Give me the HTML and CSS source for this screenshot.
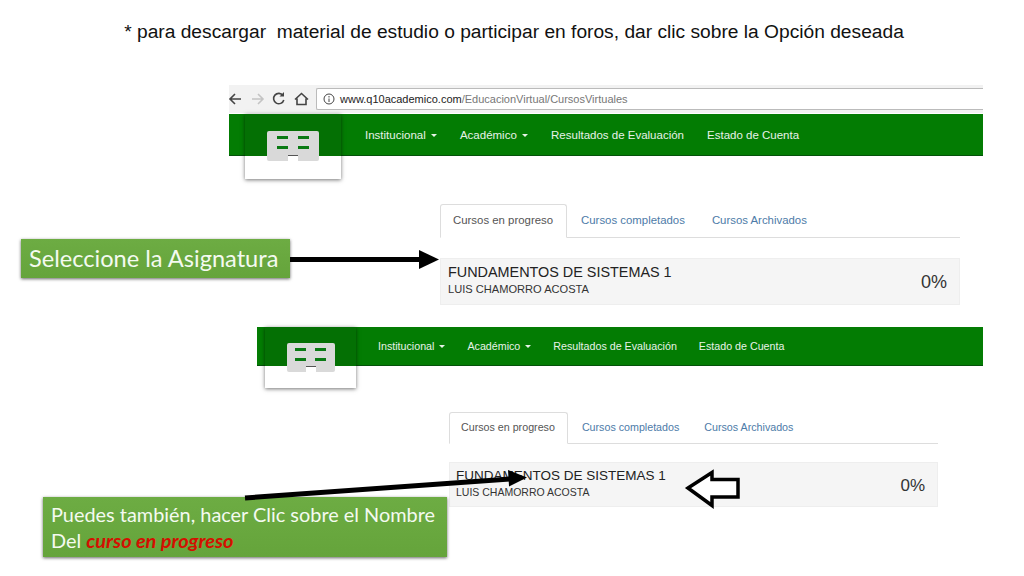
FILE: index.html
```html
<!DOCTYPE html>
<html lang="es">
<head>
  <meta charset="UTF-8"/>
  <meta name="viewport" content="width=device-width, initial-scale=1.0"/>
  <title>Seleccione la Asignatura</title>
  <link rel="stylesheet" href="styles.css">
</head>
<body>
  <div class="slide">
    <p class="slide-title">* para descargar&nbsp; material de estudio o participar en foros, dar clic sobre la Opción deseada</p>

    <!-- first capture -->
    <div class="shot shot-top">
      <div class="browser-bar">
        <svg class="browser-icons" width="84" height="22" viewBox="0 0 84 22" fill="none" stroke="#444" stroke-width="1.6">
          <path d="M13 11H2M7 6l-5 5 5 5"/>
          <path d="M24 11h11M30 6l5 5-5 5" stroke="#c4c4c4"/>
          <path d="M55 7.500a5.200 5.200 0 1 0 .8 4.500"/>
          <path d="M56 4v4.500h-4.500" fill="#444" stroke="none"/>
          <path d="M67 11.500l6.500-6 6.500 6M69 10.500v6h9v-6"/>
        </svg>
        <div class="url-box">
          <svg width="12" height="12" viewBox="0 0 12 12" fill="none" stroke="#444">
            <circle cx="6" cy="6" r="5"/>
            <path d="M6 5.500v3.500M6 3v1.500"/>
          </svg>
          <span class="url-host">www.q10academico.com</span><span class="url-path">/EducacionVirtual/CursosVirtuales</span>
        </div>
      </div>
      <nav class="navbar">
        <div class="nav-logo">
          <div class="logo-mark">
            <span class="logo-row"><i></i><i></i></span>
            <span class="logo-row"><i></i><i></i></span>
            <span class="logo-notch"></span>
          </div>
        </div>
        <ul class="nav-menu">
          <li>Institucional <b class="caret"></b></li>
          <li>Académico <b class="caret"></b></li>
          <li>Resultados de Evaluación</li>
          <li>Estado de Cuenta</li>
        </ul>
      </nav>
    </div>

    <div class="courses courses-top">
      <ul class="tabs">
        <li class="tab active">Cursos en progreso</li>
        <li class="tab">Cursos completados</li>
        <li class="tab">Cursos Archivados</li>
      </ul>
      <div class="course-row">
        <div>
          <div class="course-name">FUNDAMENTOS DE SISTEMAS 1</div>
          <div class="course-teacher">LUIS CHAMORRO ACOSTA</div>
        </div>
        <div class="course-pct">0%</div>
      </div>
    </div>

    <!-- second capture -->
    <div class="shot shot-bottom">
      <nav class="navbar">
        <div class="nav-logo">
          <div class="logo-mark">
            <span class="logo-row"><i></i><i></i></span>
            <span class="logo-row"><i></i><i></i></span>
            <span class="logo-notch"></span>
          </div>
        </div>
        <ul class="nav-menu">
          <li>Institucional <b class="caret"></b></li>
          <li>Académico <b class="caret"></b></li>
          <li>Resultados de Evaluación</li>
          <li>Estado de Cuenta</li>
        </ul>
      </nav>
    </div>

    <div class="courses courses-bottom">
      <ul class="tabs">
        <li class="tab active">Cursos en progreso</li>
        <li class="tab">Cursos completados</li>
        <li class="tab">Cursos Archivados</li>
      </ul>
      <div class="course-row">
        <div>
          <div class="course-name">FUNDAMENTOS DE SISTEMAS 1</div>
          <div class="course-teacher">LUIS CHAMORRO ACOSTA</div>
        </div>
        <div class="course-pct">0%</div>
      </div>
    </div>

    <div class="callout callout-select">Seleccione la Asignatura</div>
    <div class="callout callout-click">Puedes también, hacer Clic sobre el Nombre<br>Del <em>curso en progreso</em></div>

    <svg class="arrows" width="1024" height="576" viewBox="0 0 1024 576">
      <path d="M290 259.500H420" stroke="#000" stroke-width="5"/>
      <path d="M419 250l20 9.500-20 9.500z" fill="#000"/>
      <path d="M245 498L510 479" stroke="#000" stroke-width="5"/>
      <path d="M508 470l19 7.500-18 9z" fill="#000"/>
      <path d="M688 488L712 472.500V479.500H738V497H712V505.500z" fill="#fff" stroke="#000" stroke-width="3.500"/>
    </svg>
  </div>
</body>
</html>
```

FILE: styles.css
```css
:root {
  --green: #037c03;
  --link: #4d7ba8;
  --line: #ddd;
}
* { box-sizing: border-box; margin: 0; padding: 0; }
body {
  background: #fff;
  font-family: "Liberation Sans", Arial, sans-serif;
  color: #222;
}
ul { list-style: none; }
.slide {
  position: relative;
  width: 1024px;
  height: 576px;
  overflow: hidden;
}
.slide-title {
  padding: 21px 0 0 4px;
  text-align: center;
  font-size: 19.200px;
  line-height: 22px;
  color: #111;
}

/* pictures pasted on the slide */
.shot, .courses, .callout, .arrows { position: absolute; }
.shot-top { left: 229px; top: 85px; width: 754px; }
.shot-bottom { left: 257px; top: 327px; width: 726px; }
.courses-top { left: 440px; top: 204px; width: 520px; }
.courses-bottom { left: 449px; top: 412px; width: 489px; }
.arrows { left: 0; top: 0; }

.browser-bar {
  display: flex;
  align-items: center;
  height: 28px;
  background: #f2f2f2;
}
.browser-icons { flex: none; margin-left: -1px; margin-right: 4px; }
.url-box {
  flex: 1;
  display: flex;
  align-items: center;
  height: 22px;
  padding-left: 6px;
  background: #fff;
  border: 1px solid #bbb;
  border-right: none;
  border-radius: 2px 0 0 2px;
  font-size: 11px;
}
.url-box svg { margin-right: 5px; }
.url-host { color: #222; }
.url-path { color: #777; }

.navbar {
  display: flex;
  background: var(--green);
  border-bottom: 1px solid #04520a;
  color: #e8f2e8;
  font-size: 11.500px;
}
.shot-top .navbar { height: 42px; margin-top: 1px; }
.shot-bottom .navbar { height: 39px; }
.nav-logo {
  flex: none;
  display: flex;
  justify-content: center;
  background: linear-gradient(#047004 0, #047004 42px, #fff 42px);
  box-shadow: 0 1px 4px rgba(0, 0, 0, .55);
}
.shot-top .nav-logo { width: 96px; height: 65px; margin-left: 16px; padding-top: 17px; }
.shot-bottom .nav-logo { width: 91px; height: 61px; margin-left: 8px; padding-top: 16px; background: linear-gradient(#047004 0, #047004 39px, #fff 39px); }
.logo-mark {
  position: relative;
  display: flex;
  flex-direction: column;
  gap: 7px;
  width: 52px;
  height: 30px;
  padding-top: 5px;
  background: #d9d9d9;
  border-radius: 2px;
}
.shot-bottom .logo-mark { width: 48px; height: 29px; }
.logo-row { display: flex; justify-content: center; gap: 10px; }
.shot-bottom .logo-row { gap: 9px; }
.logo-row i { width: 11px; height: 3px; background: #0a7a14; }
.logo-notch {
  position: absolute;
  left: 50%;
  bottom: 0;
  width: 10px;
  height: 6px;
  margin-left: -5px;
  background: #fff;
  border-top: 1px solid #555;
}
.nav-menu { display: flex; align-items: center; }
.shot-top .nav-menu { gap: 23px; margin-left: 24px; }
.shot-bottom .nav-menu { gap: 22px; margin-left: 22px; font-size: 10.700px; }
.caret {
  display: inline-block;
  margin-left: 2px;
  vertical-align: 2px;
  border-top: 3px solid #e8f2e8;
  border-left: 3px solid transparent;
  border-right: 3px solid transparent;
}

.tabs { display: flex; border-bottom: 1px solid var(--line); }
.courses-top .tabs { height: 34px; margin-bottom: 20px; font-size: 11.400px; }
.courses-bottom .tabs { height: 32px; margin-bottom: 18px; font-size: 10.700px; }
.tab {
  display: flex;
  align-items: center;
  padding-bottom: 2px;
  color: var(--link);
  margin-bottom: -1px;
}
.courses-top .tab { padding-left: 15px; padding-right: 12px; }
.courses-bottom .tab { padding-left: 14px; padding-right: 11px; }
.courses-top .tab.active, .courses-bottom .tab.active {
  padding-left: 12px;
  padding-right: 13px;
  color: #555;
  background: #fff;
  border: 1px solid var(--line);
  border-bottom-color: #fff;
  border-radius: 3px 3px 0 0;
}
.courses-top .tab.active + .tab { padding-left: 14px; }
.courses-bottom .tab.active { padding-left: 11px; padding-right: 12px; }
.course-row {
  display: flex;
  justify-content: space-between;
  align-items: center;
  background: #f5f5f5;
  border: 1px solid #eee;
}
.courses-top .course-row { height: 47px; padding: 0 12px 0 7px; }
.courses-bottom .course-row { height: 45px; padding: 0 12px 0 6px; }
.course-name { font-size: 14.400px; line-height: 17px; color: #222; }
.course-teacher { font-size: 11.100px; line-height: 15px; color: #333; }
.courses-top .course-name { margin-top: -2px; }
.courses-top .course-teacher { margin-top: 1px; }
.courses-bottom .course-name { font-size: 13.500px; margin-top: -2px; }
.courses-bottom .course-teacher { font-size: 10.500px; margin-top: 1px; }
.course-pct { font-size: 18px; color: #333; padding-top: 2px; }
.courses-bottom .course-pct { font-size: 17px; padding-top: 3px; }

.callout {
  background: linear-gradient(#6dac43, #65a43b);
  color: #f4faf0;
  font-family: Lato, "Open Sans", sans-serif;
  box-shadow: 0 1px 3px rgba(0, 0, 0, .6);
}
.callout-select {
  left: 21px;
  top: 239px;
  width: 269px;
  height: 39px;
  padding-left: 8px;
  font-size: 23.600px;
  line-height: 39px;
}
.callout-click {
  left: 43px;
  top: 497px;
  width: 404px;
  height: 60px;
  padding: 4px 0 0 8px;
  font-size: 19.900px;
  line-height: 26px;
}
.callout-click em { color: #d40f00; font-weight: 700; }
```
